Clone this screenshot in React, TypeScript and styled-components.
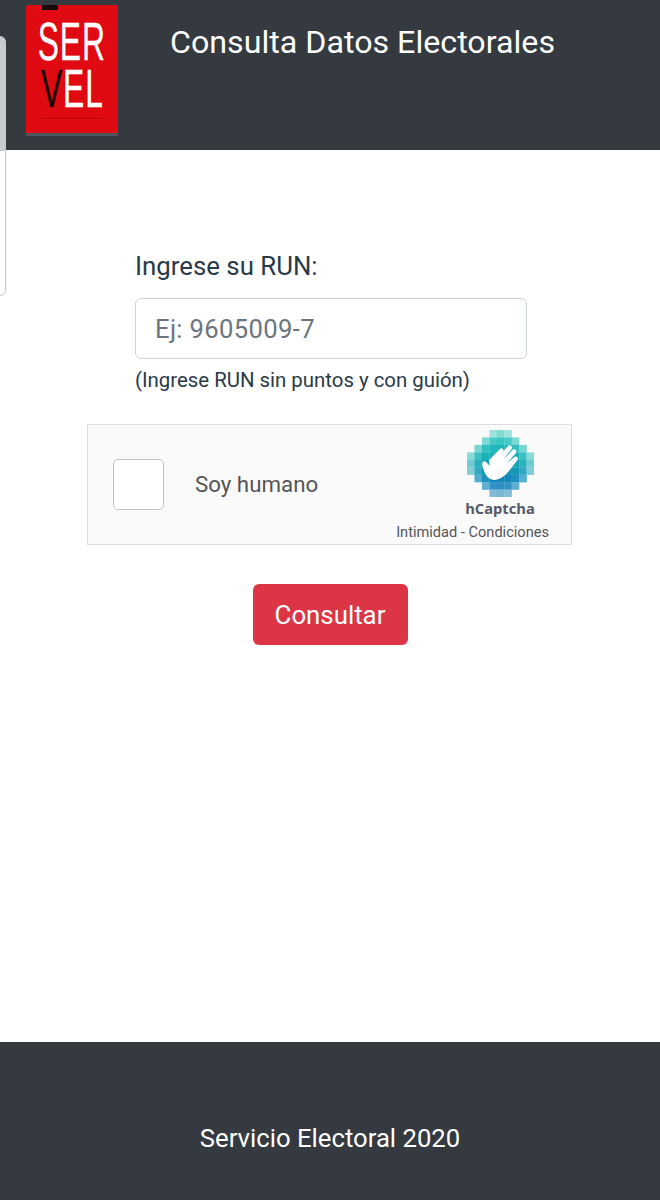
import React from "react";
import styled, { createGlobalStyle } from "styled-components";

const Global = createGlobalStyle`
  html, body { margin: 0; padding: 0; background: #fff; }
  body { font-family: Roboto, "Liberation Sans", sans-serif; }
  * { box-sizing: border-box; }
`;
const Page = styled.div`
  position: relative;
  width: 660px;
  height: 1200px;
  display: flex;
  flex-direction: column;
  overflow: hidden;
`;
const Header = styled.header`
  height: 150px;
  background: #343a40;
  display: flex;
  align-items: flex-start;
  padding: 5px 0 0 26px;
`;
const Logo = styled.div`
  width: 92px;
  height: 131px;
  background: #df0a12;
  border-radius: 2px;
  border-bottom: 3px solid #50555c;
  position: relative;
  display: flex;
  flex-direction: column;
  align-items: center;
  padding-top: 13px;
  color: #fff;
  font-family: "Liberation Sans", sans-serif;
  &::before {
    content: "";
    position: absolute;
    left: 16px;
    top: 0;
    width: 16px;
    height: 5px;
    background: #1a0808;
  }
  &::after {
    content: "";
    position: absolute;
    left: 15px;
    right: 15px;
    bottom: 14px;
    height: 1px;
    background: #b30a10;
  }
`;
const LogoLine = styled.div`
  font-size: 53px;
  line-height: 47px;
  height: 47px;
  transform: scaleX(0.6);
  white-space: nowrap;
  letter-spacing: 1.5px;
  -webkit-text-stroke: 0.3px currentColor;
`;
const DarkLetter = styled.span`
  color: #1c0303;
`;
const Title = styled.h1`
  margin: 14px 0 0 52px;
  font-weight: 400;
  font-size: 32.2px;
  line-height: 46px;
  color: #fff;
  white-space: nowrap;
`;
const SideTab = styled.div`
  position: absolute;
  left: -4px;
  top: 36px;
  width: 10px;
  height: 260px;
  background: linear-gradient(#c9cccc 0, #c9cccc 114px, #fff 114px);
  border: 1px solid #c4c8c8;
  border-radius: 0 6px 6px 0;
`;
const Main = styled.main`
  flex: 1;
  display: flex;
  flex-direction: column;
  align-items: flex-start;
  padding-top: 97px;
`;
const Field = styled.div`
  width: 392px;
  margin-left: 135px;
  display: flex;
  flex-direction: column;
`;
const Label = styled.label`
  font-size: 25.8px;
  line-height: 38px;
  color: #2a3a48;
  margin: 0 0 13px 0;
`;
const Input = styled.input`
  width: 392px;
  height: 61px;
  border: 1px solid #ced4da;
  border-radius: 6px;
  padding: 0 19px;
  font-family: inherit;
  font-size: 25.6px;
  letter-spacing: 0.35px;
  color: #495057;
  background: #fff;
  outline: none;
  &::placeholder { color: #6c757d; opacity: 1; }
`;
const Hint = styled.small`
  font-size: 20.4px;
  line-height: 30px;
  margin-top: 6px;
  color: #2a3a48;
  white-space: nowrap;
`;
const Captcha = styled.div`
  position: relative;
  width: 485px;
  height: 121px;
  margin: 29px 0 0 87px;
  background: #fafafa;
  border: 1px solid #dedede;
  display: flex;
  align-items: center;
  padding-left: 25px;
`;
const Check = styled.div`
  width: 51px;
  height: 51px;
  background: #fff;
  border: 1px solid #c2c2c2;
  border-radius: 5px;
  margin-right: 31px;
`;
const CaptchaText = styled.span`
  font-size: 22.3px;
  color: #555;
  margin-bottom: 2px;
`;
const Brand = styled.div`
  position: absolute;
  top: 5px;
  left: 372px;
  width: 80px;
  display: flex;
  flex-direction: column;
  align-items: center;
`;
const BrandName = styled.span`
  font-family: "Open Sans", sans-serif;
  font-weight: 700;
  font-size: 14.7px;
  line-height: 16px;
  margin-top: 3px;
  color: #555a68;
  white-space: nowrap;
`;
const Links = styled.span`
  position: absolute;
  right: 22px;
  bottom: 3px;
  font-size: 14.6px;
  line-height: 18px;
  color: #555;
  white-space: nowrap;
`;
const Submit = styled.button`
  align-self: center;
  margin-top: 39px;
  width: 155px;
  height: 61px;
  border: none;
  border-radius: 6px;
  background: #dc3545;
  color: #fff;
  font-family: inherit;
  font-size: 25.8px;
`;
const Footer = styled.footer`
  height: 158px;
  background: #343a40;
  color: #fff;
  font-size: 25.7px;
  display: flex;
  justify-content: center;
  padding-top: 81px;
  line-height: 30px;
`;

const shades: string[][] = [
  ["", "", "", "#9ee2dc", "#7fdad4", "#9ee2dc", "", "", ""],
  ["", "", "#7cd8d2", "#45cac6", "#38c6c4", "#45cac6", "#7cd8d2", "", ""],
  ["", "#78d6d2", "#35c0c0", "#22b8bc", "#1eb4ba", "#22b8bc", "#35c0c0", "#78d6d2", ""],
  ["#8adcda", "#3cc0c2", "#1cb0b8", "#18acb6", "#16aab6", "#18acb6", "#1cb0b8", "#3cc0c2", "#8adcda"],
  ["#70ccd2", "#2cb2bc", "#14a4b4", "#10a0b2", "#0e9eb2", "#10a0b2", "#14a4b4", "#2cb2bc", "#70ccd2"],
  ["#82ccd8", "#30a8be", "#1498b6", "#1094b4", "#0e92b4", "#1094b4", "#1498b6", "#30a8be", "#82ccd8"],
  ["", "#52aece", "#1e90be", "#1488ba", "#1286ba", "#1488ba", "#1e90be", "#52aece", ""],
  ["", "", "#60aed2", "#3292c6", "#2e8ec4", "#3292c6", "#60aed2", "", ""],
  ["", "", "", "#84bcda", "#78b6d8", "#84bcda", "", "", ""],
];

function HCaptchaMark() {
  const c = 7.45;
  return (
    <svg width="67" height="67" viewBox="0 0 67 67">
      {shades.flatMap((row, y) =>
        row.map((fill, x) =>
          fill ? <rect key={`${x}-${y}`} x={x * c} y={y * c} width={c + 0.2} height={c + 0.2} fill={fill} /> : null
        )
      )}
      <path
        fill="#fff"
        d="M16 38 C14 33 16 30 19 32 L23 36 L22 30 L33 19 C35 17 37.5 19.5 36 22 L31 28 L41 16 C43 14 46 16.5 44.5 19 L36 30 L45.5 20 C47.5 18 50.5 20.5 49 23 L40 33 L47.5 27 C49.5 25.5 52 28 50.5 30 L42 41 C36 48 29 52 23.5 49 C19 47 17.5 42 16 38 Z"
      />
    </svg>
  );
}

export default function App() {
  return (
    <Page>
      <Global />
      <Header>
        <Logo>
          <LogoLine>SER</LogoLine>
          <LogoLine>
            <DarkLetter>V</DarkLetter>EL
          </LogoLine>
        </Logo>
        <Title>Consulta Datos Electorales</Title>
      </Header>
      <SideTab />
      <Main>
        <Field>
          <Label>Ingrese su RUN:</Label>
          <Input placeholder="Ej: 9605009-7" />
          <Hint>(Ingrese RUN sin puntos y con guión)</Hint>
        </Field>
        <Captcha>
          <Check />
          <CaptchaText>Soy humano</CaptchaText>
          <Brand>
            <HCaptchaMark />
            <BrandName>hCaptcha</BrandName>
          </Brand>
          <Links>Intimidad - Condiciones</Links>
        </Captcha>
        <Submit>Consultar</Submit>
      </Main>
      <Footer>Servicio Electoral 2020</Footer>
    </Page>
  );
}
